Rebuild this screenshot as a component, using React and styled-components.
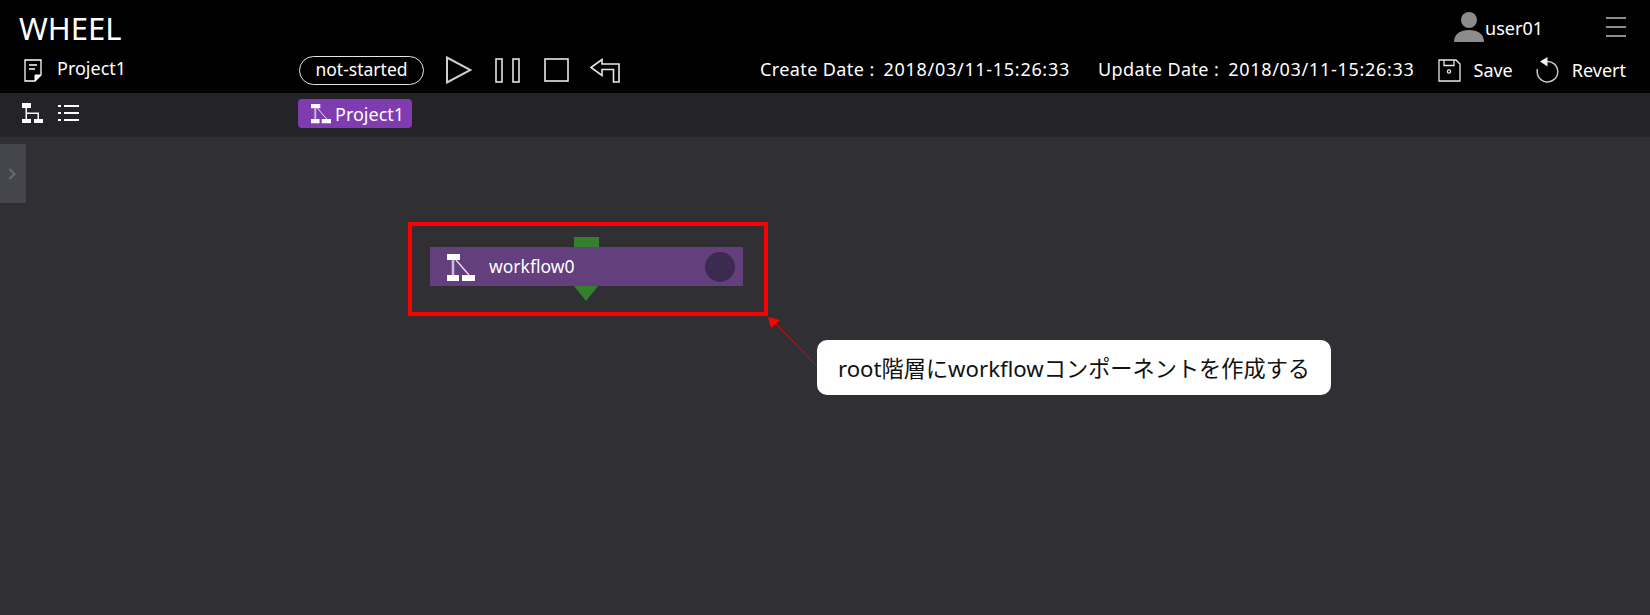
import styled, { createGlobalStyle } from "styled-components";

const GlobalStyle = createGlobalStyle`
  html, body {
    margin: 0;
    padding: 0;
    background: #2f2f34;
  }
  body {
    font-family: "Noto Sans", "Noto Sans CJK JP", sans-serif;
    color: #fff;
  }
`;

const WorkflowIcon = ({ size = 28 }) => (
  <svg width={size} height={size} viewBox="0 0 28 28">
    <rect x="0" y="0" width="13" height="6" fill="#fff" />
    <rect x="0" y="21" width="12" height="6" fill="#fff" />
    <rect x="15" y="21" width="13" height="6" fill="#fff" />
    <path d="M6 6V21" stroke="#c9bcd6" strokeWidth="2.6" />
    <path d="M9 6L22 21" stroke="#e6deee" strokeWidth="1.4" />
  </svg>
);

const App = () => {
  return (
    <Page>
      <GlobalStyle />
      <Header>
        <TopRow>
          <Logo>WHEEL</Logo>
          <UserBox>
            <svg width="30" height="30" viewBox="0 0 30 30">
              <circle cx="15" cy="8" r="8" fill="#8c8c8c" />
              <path d="M0 30C0 22 6 18 15 18S30 22 30 30Z" fill="#8c8c8c" />
            </svg>
            <UserName>user01</UserName>
            <Burger>
              <i />
              <i />
              <i />
            </Burger>
          </UserBox>
        </TopRow>
        <InfoRow>
          <ProjectInfo>
            <svg width="18" height="23" viewBox="0 0 18 23" fill="none" stroke="#fff">
              <path d="M1 1H17V16L11 22H1Z" strokeWidth="1.3" />
              <path d="M5 6H13M5 10H11" strokeWidth="1.3" />
              <path d="M11 22V16H17Z" fill="#fff" strokeWidth="1" />
            </svg>
            <ProjectName>Project1</ProjectName>
          </ProjectInfo>
          <Status>not-started</Status>
          <Controls>
            <svg width="26" height="28" viewBox="0 0 26 28" fill="none" stroke="#cfcfcf" strokeWidth="2">
              <path d="M1 1.5V26.5L24.5 14Z" />
            </svg>
            <PauseIcon width="26" height="25" viewBox="0 0 26 25" fill="none" stroke="#e2e2e2" strokeWidth="1.6">
              <rect x="1" y="1" width="6" height="23" />
              <rect x="18" y="1" width="6" height="23" />
            </PauseIcon>
            <StopIcon width="25" height="24" viewBox="0 0 25 24" fill="none" stroke="#e8e8e8" strokeWidth="1.6">
              <rect x="1" y="1" width="23" height="22" />
            </StopIcon>
            <BackIcon width="30" height="25" viewBox="0 0 30 25" fill="none" stroke="#e8e8e8" strokeWidth="1.6">
              <path d="M1 9.5L12 1.5V6H29V24H23.5V11.5H12V17.5Z" />
            </BackIcon>
          </Controls>
          <RightInfo>
            <DateItem>
              <DateLabel>Create Date :</DateLabel>
              <DateValue>2018/03/11-15:26:33</DateValue>
            </DateItem>
            <DateItem>
              <DateLabel>Update Date :</DateLabel>
              <DateValue>2018/03/11-15:26:33</DateValue>
            </DateItem>
            <ActionGroup>
              <svg width="23" height="23" viewBox="0 0 23 23" fill="none" stroke="#e8e8e8" strokeWidth="1.3">
                <path d="M1 1H18L22 5V22H1Z" />
                <path d="M6 1V6.5H16V1" />
                <circle cx="11" cy="12.5" r="1.6" />
              </svg>
              <ActionLabel>Save</ActionLabel>
            </ActionGroup>
            <ActionGroup>
              <svg width="23" height="26" viewBox="0 0 23 26" fill="none">
                <path d="M10 4.5A10.3 10.3 0 1 1 1.5 12" stroke="#c8c8c8" strokeWidth="1.5" />
                <path d="M11.5 0L4 4.5L11.5 9.5Z" fill="#f0f0f0" />
              </svg>
              <ActionLabel>Revert</ActionLabel>
            </ActionGroup>
          </RightInfo>
        </InfoRow>
      </Header>
      <SubBar>
        <ViewIcons>
          <svg width="21" height="20" viewBox="0 0 21 20" fill="#fff">
            <rect x="0" y="0" width="9" height="5" />
            <rect x="0" y="16" width="9" height="4" />
            <rect x="12" y="16" width="9" height="4" />
            <path d="M3.5 5H5V16H3.5ZM5 9.5H17V16H15.5V11H5Z" />
          </svg>
          <svg width="21" height="18" viewBox="0 0 21 18" fill="#fff">
            <rect x="0" y="1" width="3" height="2" />
            <rect x="6" y="1" width="15" height="2" />
            <rect x="0" y="8" width="3" height="2" />
            <rect x="6" y="8" width="15" height="2" />
            <rect x="0" y="15" width="3" height="2" />
            <rect x="6" y="15" width="15" height="2" />
          </svg>
        </ViewIcons>
        <Crumb>
          <WorkflowIcon size={20} />
          Project1
        </Crumb>
      </SubBar>
      <Canvas>
        <SideTab>
          <svg width="8" height="12" viewBox="0 0 8 12" fill="none" stroke="#6c6c74" strokeWidth="1.8">
            <path d="M1.5 1L6.5 6L1.5 11" />
          </svg>
        </SideTab>
        <HighlightBox />
        <InputPort />
        <Node>
          <WorkflowIcon />
          <NodeName>workflow0</NodeName>
          <NodeDot />
        </Node>
        <OutputPort />
        <Leader width="60" height="60" viewBox="0 0 60 60">
          <path d="M51 52L5 5" stroke="#ff0000" strokeWidth="1" fill="none" />
          <path d="M1 2L13 5L4 13Z" fill="#ff0000" />
        </Leader>
        <Callout>root階層にworkflowコンポーネントを作成する</Callout>
      </Canvas>
    </Page>
  );
};

const Page = styled.div`
  width: 1650px;
  height: 615px;
  display: flex;
  flex-direction: column;
  overflow: hidden;
`;

const Header = styled.header`
  height: 93px;
  background: #000;
  display: flex;
  flex-direction: column;
`;

const TopRow = styled.div`
  height: 47px;
  display: flex;
  justify-content: space-between;
  align-items: center;
  padding: 9px 24px 0 19px;
  box-sizing: border-box;
`;

const Logo = styled.div`
  font-size: 31px;
  line-height: 38px;
`;

const UserBox = styled.div`
  display: flex;
  align-items: center;
  margin-top: -3px;
`;

const UserName = styled.span`
  font-size: 18px;
  margin: 2px 63px 0 1px;
`;

const Burger = styled.div`
  width: 20px;
  height: 20px;
  display: flex;
  flex-direction: column;
  justify-content: space-between;

  i {
    display: block;
    height: 2px;
    background: #8c8c8c;
  }
`;

const InfoRow = styled.div`
  flex: 1;
  display: flex;
  align-items: center;
  padding: 0 24px;
`;

const ProjectInfo = styled.div`
  width: 275px;
  display: flex;
  align-items: center;
  gap: 15px;
`;

const ProjectName = styled.span`
  font-size: 18px;
  margin-top: -5px;
`;

const Status = styled.div`
  width: 125px;
  height: 29px;
  box-sizing: border-box;
  border: 1.5px solid #e6e6e6;
  border-radius: 15px;
  font-size: 17.5px;
  line-height: 25px;
  text-align: center;
`;

const Controls = styled.div`
  display: flex;
  align-items: center;
  margin-left: 22px;
`;

const PauseIcon = styled.svg`
  margin-left: 23px;
`;

const StopIcon = styled.svg`
  margin-left: 23px;
`;

const BackIcon = styled.svg`
  margin-left: 21px;
`;

const RightInfo = styled.div`
  margin-left: auto;
  display: flex;
  align-items: center;
  font-size: 18px;
`;

const DateItem = styled.div`
  display: flex;
  gap: 9px;
  margin: -2px 28px 0 0;
  white-space: nowrap;

  &:nth-child(2) {
    margin-right: 23px;
  }
`;

const DateLabel = styled.span`
  letter-spacing: 0.4px;
`;

const DateValue = styled.span`
  letter-spacing: 0.7px;
`;

const ActionGroup = styled.div`
  display: flex;
  align-items: center;
  gap: 13px;

  & + & {
    margin-left: 23px;
  }
`;

const ActionLabel = styled.span`
  font-size: 18px;
`;

const SubBar = styled.div`
  height: 44px;
  background: #232328;
  display: flex;
  align-items: center;
  padding-left: 22px;
`;

const ViewIcons = styled.div`
  width: 276px;
  margin-top: -4px;
  display: flex;
  align-items: center;
  gap: 15px;
`;

const Crumb = styled.div`
  width: 114px;
  height: 29px;
  box-sizing: border-box;
  margin-top: -3px;
  padding-left: 13px;
  background: #7f3bb0;
  border-radius: 4px;
  display: flex;
  align-items: center;
  gap: 4px;
  font-size: 18px;
`;

const Canvas = styled.main`
  position: relative;
  flex: 1;
  background: #2f2f34;
`;

const SideTab = styled.div`
  position: absolute;
  left: 0;
  top: 7px;
  width: 26px;
  height: 59px;
  background: #45454d;
  display: flex;
  align-items: center;
  padding-left: 8px;
  box-sizing: border-box;
`;

const HighlightBox = styled.div`
  position: absolute;
  left: 408px;
  top: 85px;
  width: 360px;
  height: 94px;
  box-sizing: border-box;
  border: 4px solid #ff0000;
`;

const InputPort = styled.div`
  position: absolute;
  left: 574px;
  top: 100px;
  width: 25px;
  height: 10px;
  background: #35802f;
`;

const OutputPort = styled.div`
  position: absolute;
  left: 574px;
  top: 149px;
  border-style: solid;
  border-width: 15px 12.5px 0;
  border-color: #35802f transparent transparent;
`;

const Node = styled.div`
  position: absolute;
  left: 430px;
  top: 110px;
  width: 313px;
  height: 39px;
  background: #633f7e;
  display: flex;
  align-items: center;
  padding: 0 8px 0 17px;
  box-sizing: border-box;

  svg {
    margin-top: 2px;
  }
`;

const NodeName = styled.span`
  font-size: 17.5px;
  margin: -2px 0 0 14px;
`;

const NodeDot = styled.div`
  width: 30px;
  height: 30px;
  border-radius: 50%;
  background: #3c2b51;
  margin-left: auto;
`;

const Leader = styled.svg`
  position: absolute;
  left: 767px;
  top: 178px;
`;

const Callout = styled.div`
  position: absolute;
  left: 817px;
  top: 203px;
  width: 514px;
  height: 55px;
  box-sizing: border-box;
  background: #fff;
  border-radius: 10px;
  color: #111;
  font-size: 22.2px;
  line-height: 57px;
  text-align: center;
  white-space: nowrap;
`;

export default App;
